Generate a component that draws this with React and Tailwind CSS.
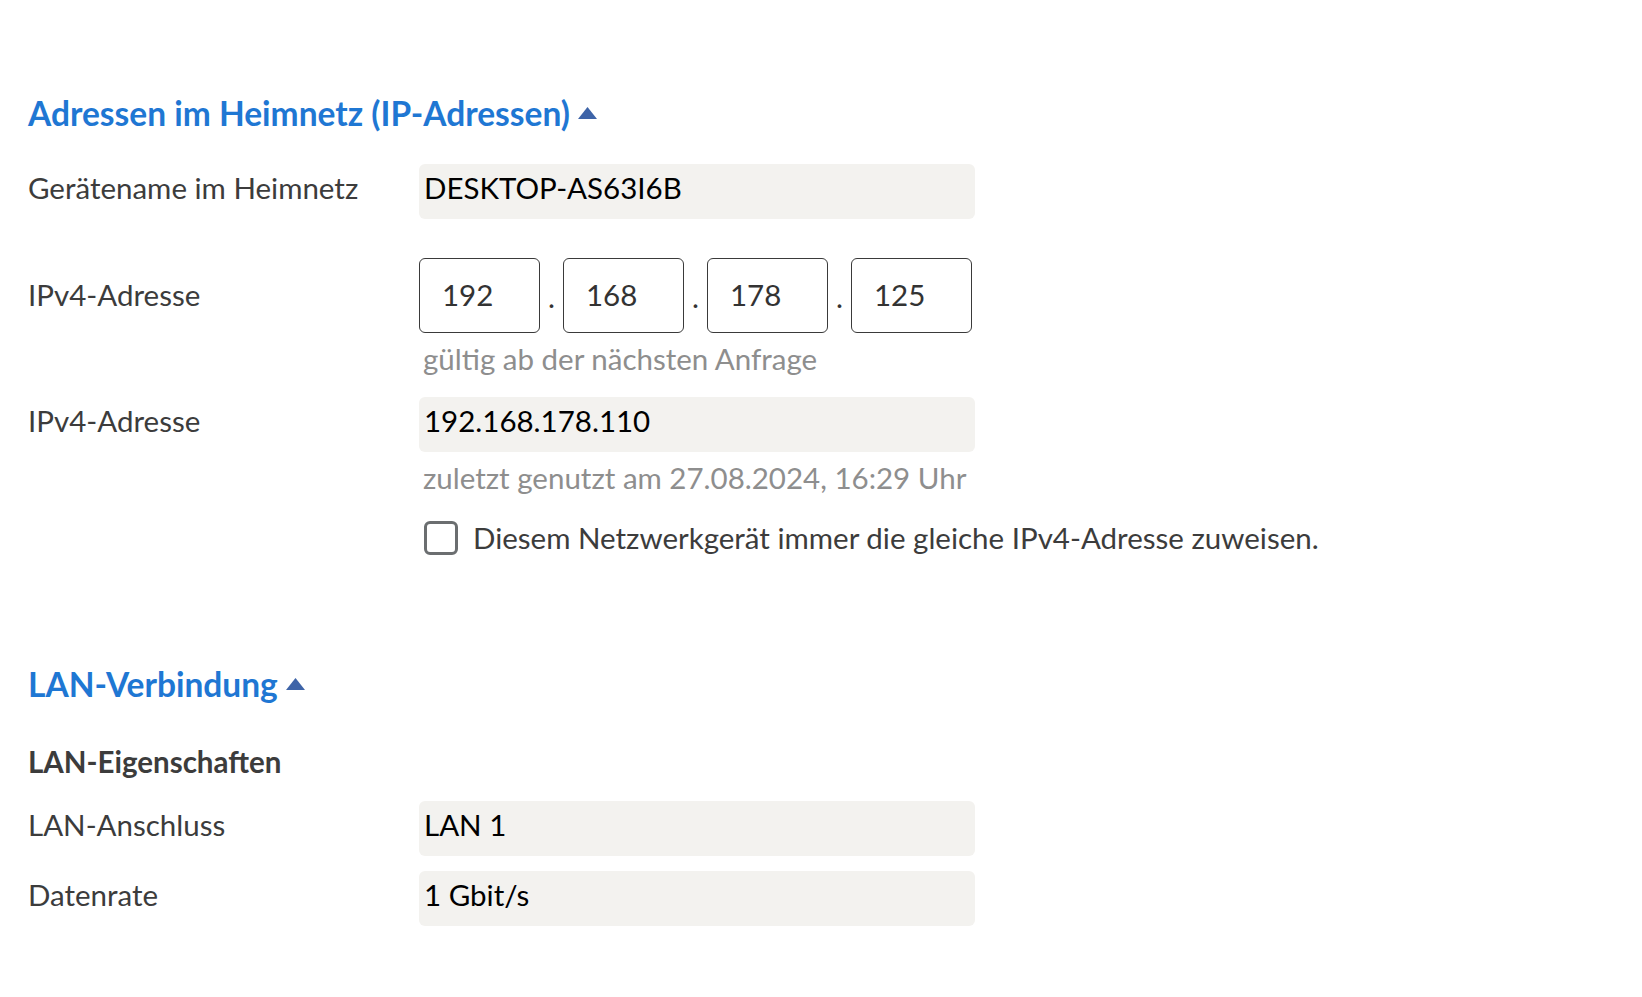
import React from "react";

const font = { fontFamily: "Lato, 'Noto Sans', sans-serif" };

const Caret = () => (
  <svg width="19" height="12" viewBox="0 0 19 12" className="ml-2 shrink-0">
    <polygon points="9.5,0 19,12 0,12" fill="#3e64a8" />
  </svg>
);

const Heading = ({ children }) => (
  <div className="flex items-center h-[40px] text-[33.5px] font-bold text-[#1f77d3]">
    <span>{children}</span>
    <Caret />
  </div>
);

const ReadOnlyField = ({ label, value }) => (
  <div className="flex items-start">
    <div className="w-[391px] shrink-0 h-[48px] leading-[48px] text-[#3c3c3c]">{label}</div>
    <div className="w-[556px] h-[55px] bg-[#f3f2ef] rounded-[6px] pl-[5px] leading-[48px] text-black">
      {value}
    </div>
  </div>
);

const Octet = ({ value }) => (
  <div className="w-[121px] h-[75px] border border-[#3a3a3a] rounded-[6px] flex items-center pl-[22px] text-[#333]">
    {value}
  </div>
);

const App = () => {
  const octets = ["192", "168", "178", "125"];

  return (
    <div className="min-h-screen bg-white pl-[28px] pt-[93px] text-[29.5px]" style={font}>
      <Heading>Adressen im Heimnetz (IP-Adressen)</Heading>

      <div className="mt-[31px]">
        <ReadOnlyField label="Gerätename im Heimnetz" value="DESKTOP-AS63I6B" />
      </div>

      <div className="flex items-center mt-[39px]">
        <div className="w-[391px] shrink-0 text-[#3c3c3c]">IPv4-Adresse</div>
        <div className="flex items-center">
          {octets.map((o, i) => (
            <React.Fragment key={i}>
              {i > 0 && (
                <span className="w-[23px] text-center text-[#333] self-end pb-[22px] leading-none">.</span>
              )}
              <Octet value={o} />
            </React.Fragment>
          ))}
        </div>
      </div>
      <div className="pl-[395px] mt-[8px] h-[36px] leading-[36px] text-[#8e8e8e]">
        gültig ab der nächsten Anfrage
      </div>

      <div className="mt-[20px]">
        <ReadOnlyField label="IPv4-Adresse" value="192.168.178.110" />
      </div>
      <div className="pl-[395px] mt-[8px] h-[36px] leading-[36px] text-[#8e8e8e]">
        zuletzt genutzt am 27.08.2024, 16:29 Uhr
      </div>

      <label className="flex items-center pl-[396px] mt-[25px] h-[34px] cursor-pointer">
        <input type="checkbox" className="sr-only" />
        <span className="w-[34px] h-[34px] rounded-[6px] border-[3px] border-[#6b6e70] bg-white shrink-0" />
        <span className="ml-[15px] text-[#3c3c3c]">
          Diesem Netzwerkgerät immer die gleiche IPv4-Adresse zuweisen.
        </span>
      </label>

      <div className="mt-[109px]">
        <Heading>LAN-Verbindung</Heading>
      </div>

      <div className="mt-[38px] h-[40px] leading-[40px] font-bold text-[#3c3c3c]">LAN-Eigenschaften</div>

      <div className="mt-[19px]">
        <ReadOnlyField label="LAN-Anschluss" value="LAN 1" />
      </div>
      <div className="mt-[15px]">
        <ReadOnlyField label="Datenrate" value="1 Gbit/s" />
      </div>
    </div>
  );
};

export default App;
